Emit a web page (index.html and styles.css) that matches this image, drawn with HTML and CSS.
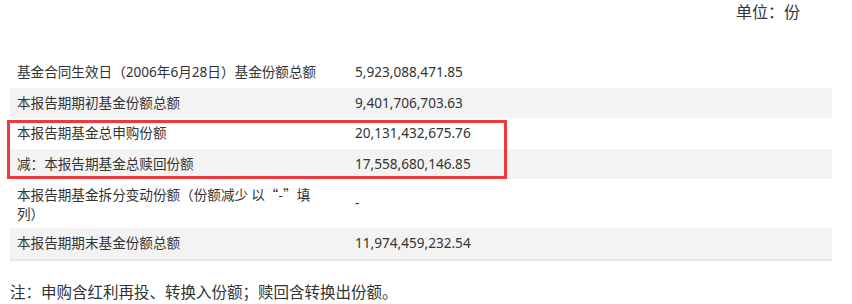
FILE: index.html
```html
<!DOCTYPE html>
<html lang="zh-CN">
<head>
<meta charset="utf-8">
<link rel="stylesheet" href="styles.css">
</head>
<body>
<div class="page">
  <div class="unit">单位：份</div>
  <div class="table">
    <div class="row">
      <div class="label">基金合同生效日（2006年6月28日）基金份额总额</div>
      <div class="value">5,923,088,471.85</div>
    </div>
    <div class="row alt">
      <div class="label">本报告期期初基金份额总额</div>
      <div class="value">9,401,706,703.63</div>
    </div>
    <div class="row">
      <div class="label">本报告期基金总申购份额</div>
      <div class="value">20,131,432,675.76</div>
    </div>
    <div class="row alt">
      <div class="label">减：本报告期基金总赎回份额</div>
      <div class="value">17,558,680,146.85</div>
    </div>
    <div class="row">
      <div class="label cjk">本报告期基金拆分变动份额（份额减少 以“-”填列）</div>
      <div class="value">-</div>
    </div>
    <div class="row alt last">
      <div class="label">本报告期期末基金份额总额</div>
      <div class="value">11,974,459,232.54</div>
    </div>
    <div class="highlight"></div>
  </div>
  <div class="note">注：申购含红利再投、转换入份额；赎回含转换出份额。</div>
</div>
</body>
</html>
```

FILE: styles.css
```css
html, body {
  margin: 0;
  padding: 0;
  background: #ffffff;
}
body {
  font-family: "Noto Sans", "Noto Sans CJK SC", sans-serif;
  color: #333333;
  width: 852px;
  height: 304px;
  overflow: hidden;
}
.page {
  display: flex;
  flex-direction: column;
}
.unit {
  font-size: 16px;
  line-height: 24px;
  text-align: right;
  padding-right: 52px;
  height: 24px;
}
.table {
  position: relative;
  margin-top: 33px;
  margin-left: 10px;
  width: 822px;
  display: flex;
  flex-direction: column;
  font-size: 13.6px;
  line-height: 18.5px;
}
.row {
  display: flex;
  align-items: center;
  padding: 6px 0;
}
.row.alt {
  background: #f3f3f3;
}
.row.last {
  border-bottom: 2px solid #e6e6e6;
}
.label {
  box-sizing: border-box;
  width: 338px;
  padding: 0 20px 0 7px;
  flex: none;
}
.label.cjk {
  font-family: "Noto Sans CJK SC", sans-serif;
}
.value {
  padding: 0 7px;
  flex: 1;
}
.highlight {
  position: absolute;
  left: -3px;
  top: 63px;
  width: 494px;
  height: 53px;
  border: 3px solid #f0393b;
  pointer-events: none;
}
.note {
  margin-top: 20px;
  margin-left: 10px;
  font-size: 15.5px;
  line-height: 22px;
}
```
